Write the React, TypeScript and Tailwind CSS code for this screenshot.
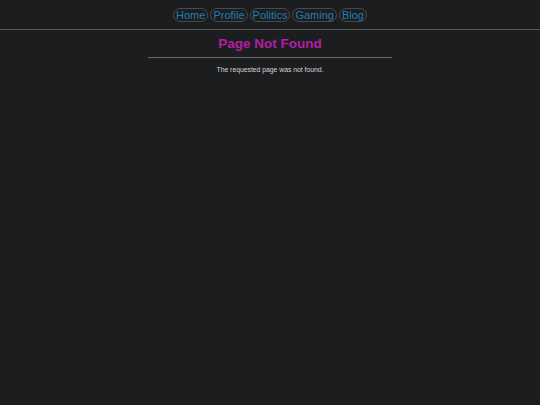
const links = ["Home", "Profile", "Politics", "Gaming", "Blog"];

export default function App() {
  return (
    <div className="min-h-[405px] bg-[#1c1d1f] font-['Liberation_Sans',Arial,sans-serif] antialiased">
      <header className="flex h-[30px] items-center justify-center gap-[2px] border-b border-[#5a5a5a]">
        {links.map((link) => (
          <a
            key={link}
            href="#"
            className="rounded-full border border-[#4a4a4a] px-[2px] text-[11px] leading-[12px] text-[#1c80b2] no-underline"
          >
            {link}
          </a>
        ))}
      </header>

      <main className="flex flex-col items-center">
        <h1 className="mt-[6px] text-[13.5px] leading-[16px] font-bold text-[#b31ea6]">Page Not Found</h1>
        <hr className="mt-[5px] w-[244px] border-t border-[#6a6a6a]" />
        <p className="mt-[8px] text-[6.8px] leading-[8px] text-[#d4d4d4]">The requested page was not found.</p>
      </main>
    </div>
  );
}
